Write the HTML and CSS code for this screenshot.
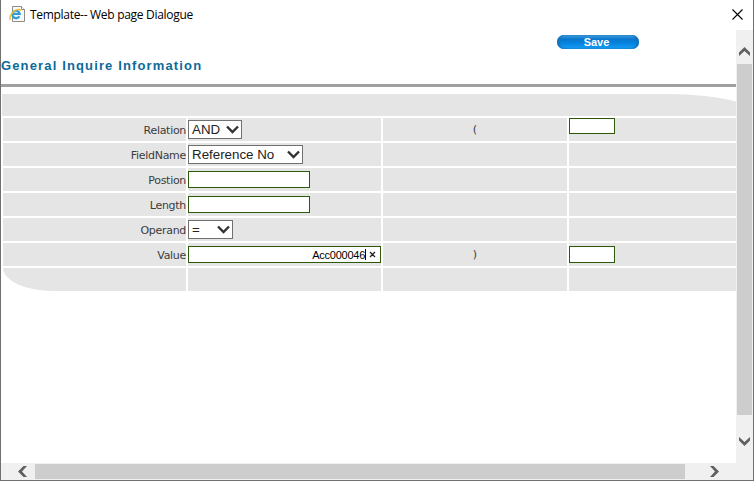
FILE: index.html
```
<!DOCTYPE html>
<html lang="en">
<head>
<meta charset="utf-8">
<title>Template-- Web page Dialogue</title>
<link rel="stylesheet" href="styles.css">
</head>
<body>
<div class="window">
  <header class="titlebar">
    <svg class="page-icon" width="17" height="17" viewBox="0 0 17 17">
      <path d="M3.5 .5h9l3 3v12h-12z" fill="#f8f8f8" stroke="#8c8c8c"/>
      <path d="M12.5 .5v3h3" fill="#fff" stroke="#8c8c8c"/>
      <path d="M10.3 10.3A3.7 3.7 0 1 1 10.7 8H4.2" fill="none" stroke="#2a9be0" stroke-width="2.2"/>
      <path d="M1.5 13.8C-.5 11.500 3 6 7 4.200C9.500 3 11.600 3 11.300 5" fill="none" stroke="#f0bd22" stroke-width="1.4"/>
    </svg>
    <span class="title">Template-- Web page Dialogue</span>
    <svg class="close" width="11" height="11" viewBox="0 0 11 11"><path d="M.5 .5l10 10M10.500 .5l-10 10" stroke="#000" stroke-width="1.1"/></svg>
  </header>
  <div class="client">
    <main class="page">
      <div class="toolbar"><button class="save">Save</button></div>
      <h1><span class="heading">General Inquire Information</span></h1>
      <div class="cap"></div>
      <div class="grid">
        <div class="label"><span>Relation</span></div>
        <div><span class="select relation"><span>AND</span><svg width="13" height="9" viewBox="0 0 13 9"><path d="M1 1.500l5.500 5.500L12 1.500" /></svg></span></div>
        <div class="paren">(</div>
        <div class="top"><input class="short first"></div>

        <div class="label"><span>FieldName</span></div>
        <div><span class="select field"><span>Reference No</span><svg width="13" height="9" viewBox="0 0 13 9"><path d="M1 1.500l5.500 5.500L12 1.500" /></svg></span></div>
        <div></div><div></div>

        <div class="label"><span>Postion</span></div>
        <div><input class="medium"></div>
        <div></div><div></div>

        <div class="label"><span>Length</span></div>
        <div><input class="medium"></div>
        <div></div><div></div>

        <div class="label"><span>Operand</span></div>
        <div><span class="select operand"><span>=</span><svg width="13" height="9" viewBox="0 0 13 9"><path d="M1 1.500l5.500 5.500L12 1.500" /></svg></span></div>
        <div></div><div></div>

        <div class="label"><span>Value</span></div>
        <div><div class="value"><span class="text">Acc000046</span><i class="caret"></i><svg width="7" height="7" viewBox="0 0 7 7"><path d="M1 1l5 5M6 1L1 6" stroke="#222" stroke-width="1.3"/></svg></div></div>
        <div class="paren">)</div>
        <div><input class="short"></div>

        <div class="corner"></div><div></div><div></div><div></div>
      </div>
    </main>
    <div class="vbar">
      <svg class="up" width="11" height="9" viewBox="0 0 11 9"><path d="M0 5.500L5.500 0 11 5.500V9L5.500 4 0 9z"/></svg>
      <div class="vthumb"></div>
      <svg class="down" width="11" height="9" viewBox="0 0 11 9"><path d="M0 3.500L5.500 9 11 3.500V0L5.500 5 0 0z"/></svg>
    </div>
  </div>
  <div class="hbar">
    <svg class="left" width="9" height="11" viewBox="0 0 9 11"><path d="M5.500 0L0 5.500 5.500 11H9L4 5.500 9 0z"/></svg>
    <div class="hthumb"></div>
    <svg class="right" width="9" height="11" viewBox="0 0 9 11"><path d="M3.500 0L9 5.500 3.500 11H0L5 5.500 0 0z"/></svg>
  </div>
</div>
</body>
</html>
```
FILE: styles.css
```
* { box-sizing: border-box; }
body { margin: 0; background: #fff; overflow: hidden; }
svg { display: block; flex: none; }
.window {
  width: 754px;
  height: 481px;
  border: solid #707070;
  border-width: 0 1px 1px;
  display: flex;
  flex-direction: column;
}
.titlebar { height: 30px; display: flex; align-items: center; padding: 0 10px 2px 8px; flex: none; }
.title { font: 12px/16px "Open Sans", sans-serif; letter-spacing: -0.3px; color: #000; margin-left: 4px; padding-top: 2px; white-space: nowrap; }
.close { margin-left: auto; }
.client { height: 433px; display: flex; }
.page { width: 735px; overflow: hidden; }
.toolbar { height: 25px; padding: 5px 0 0 556px; }
.save {
  display: block;
  width: 82px;
  height: 14px;
  border: 0;
  border-radius: 7px;
  padding: 0;
  background: linear-gradient(#48a5e3, #0876cc 30%, #0784df 60%, #14a0fa);
  box-shadow: inset 2px 0 2px #1672b8, inset -2px 0 2px #1672b8;
  color: #fff;
  font: bold 11px/14px "Liberation Sans", sans-serif;
  text-indent: -3px;
}
h1 {
  margin: 0;
  height: 32px;
  padding-top: 1px;
  border-bottom: 3px solid #a0a0a0;
  font: bold 13px/20px "Liberation Sans", sans-serif;
  letter-spacing: 1.14px;
  color: #0c6a9b;
  white-space: nowrap;
}
.cap { margin: 7px -22px 2px 1px; height: 22px; background: #e5e5e5; border-top-right-radius: 90px 22px; }
.grid {
  margin-left: 2px;
  display: grid;
  grid-template-columns: 183px 193px 184px 167px;
  grid-auto-rows: 23px;
  gap: 2px;
  font: 11px/14px "DejaVu Sans", sans-serif;
  color: #3c3c3c;
}
.grid > div { background: #e5e5e5; display: flex; align-items: center; }
.grid > .label { justify-content: flex-end; letter-spacing: -.3px; padding-top: 2px; }
.grid > .paren { justify-content: center; padding-top: 1px; }
.grid > .top { align-items: flex-start; }
.grid > .corner { border-bottom-left-radius: 50px 23px; }
input { border: 1px solid #2c5a08; background: #fff; padding: 0; height: 17px; border-radius: 0; outline: 0; display: block; }
.medium { width: 122px; }
.short { width: 46px; }
.first { height: 16px; }
.select {
  height: 19px;
  border: 1px solid #707070;
  background: #fff;
  display: flex;
  align-items: center;
  justify-content: space-between;
  padding: 0 2px 0 3px;
  font: 13.33px/17px "Liberation Sans", sans-serif;
  color: #222;
}
.select path { fill: none; stroke: #333; stroke-width: 2.4; }
.relation { width: 54px; }
.field { width: 115px; }
.operand { width: 45px; }
.value {
  width: 193px;
  height: 17px;
  border: 1px solid #2c5a08;
  background: #fff;
  display: flex;
  align-items: center;
  justify-content: flex-end;
  padding-right: 4px;
  font: 11px/15px "Liberation Sans", sans-serif;
  letter-spacing: -.25px;
  color: #000;
}
.value .text { padding-top: 1px; }
.caret { width: 1px; height: 11px; background: #000; margin-right: 3px; }
.vbar { width: 17px; background: #f0f0f0; display: flex; flex-direction: column; align-items: center; }
.up { margin: 17px 0 8px; }
.vthumb { width: 15px; height: 351px; background: #cdcdcd; }
.down { margin-top: 22px; }
.vbar path, .hbar path { fill: #606060; }
.hbar { height: 17px; background: #f0f0f0; display: flex; align-items: center; }
.left { margin: 0 8px 0 17px; }
.hthumb { width: 650px; height: 15px; background: #cdcdcd; }
.right { margin-left: 25px; }
```
